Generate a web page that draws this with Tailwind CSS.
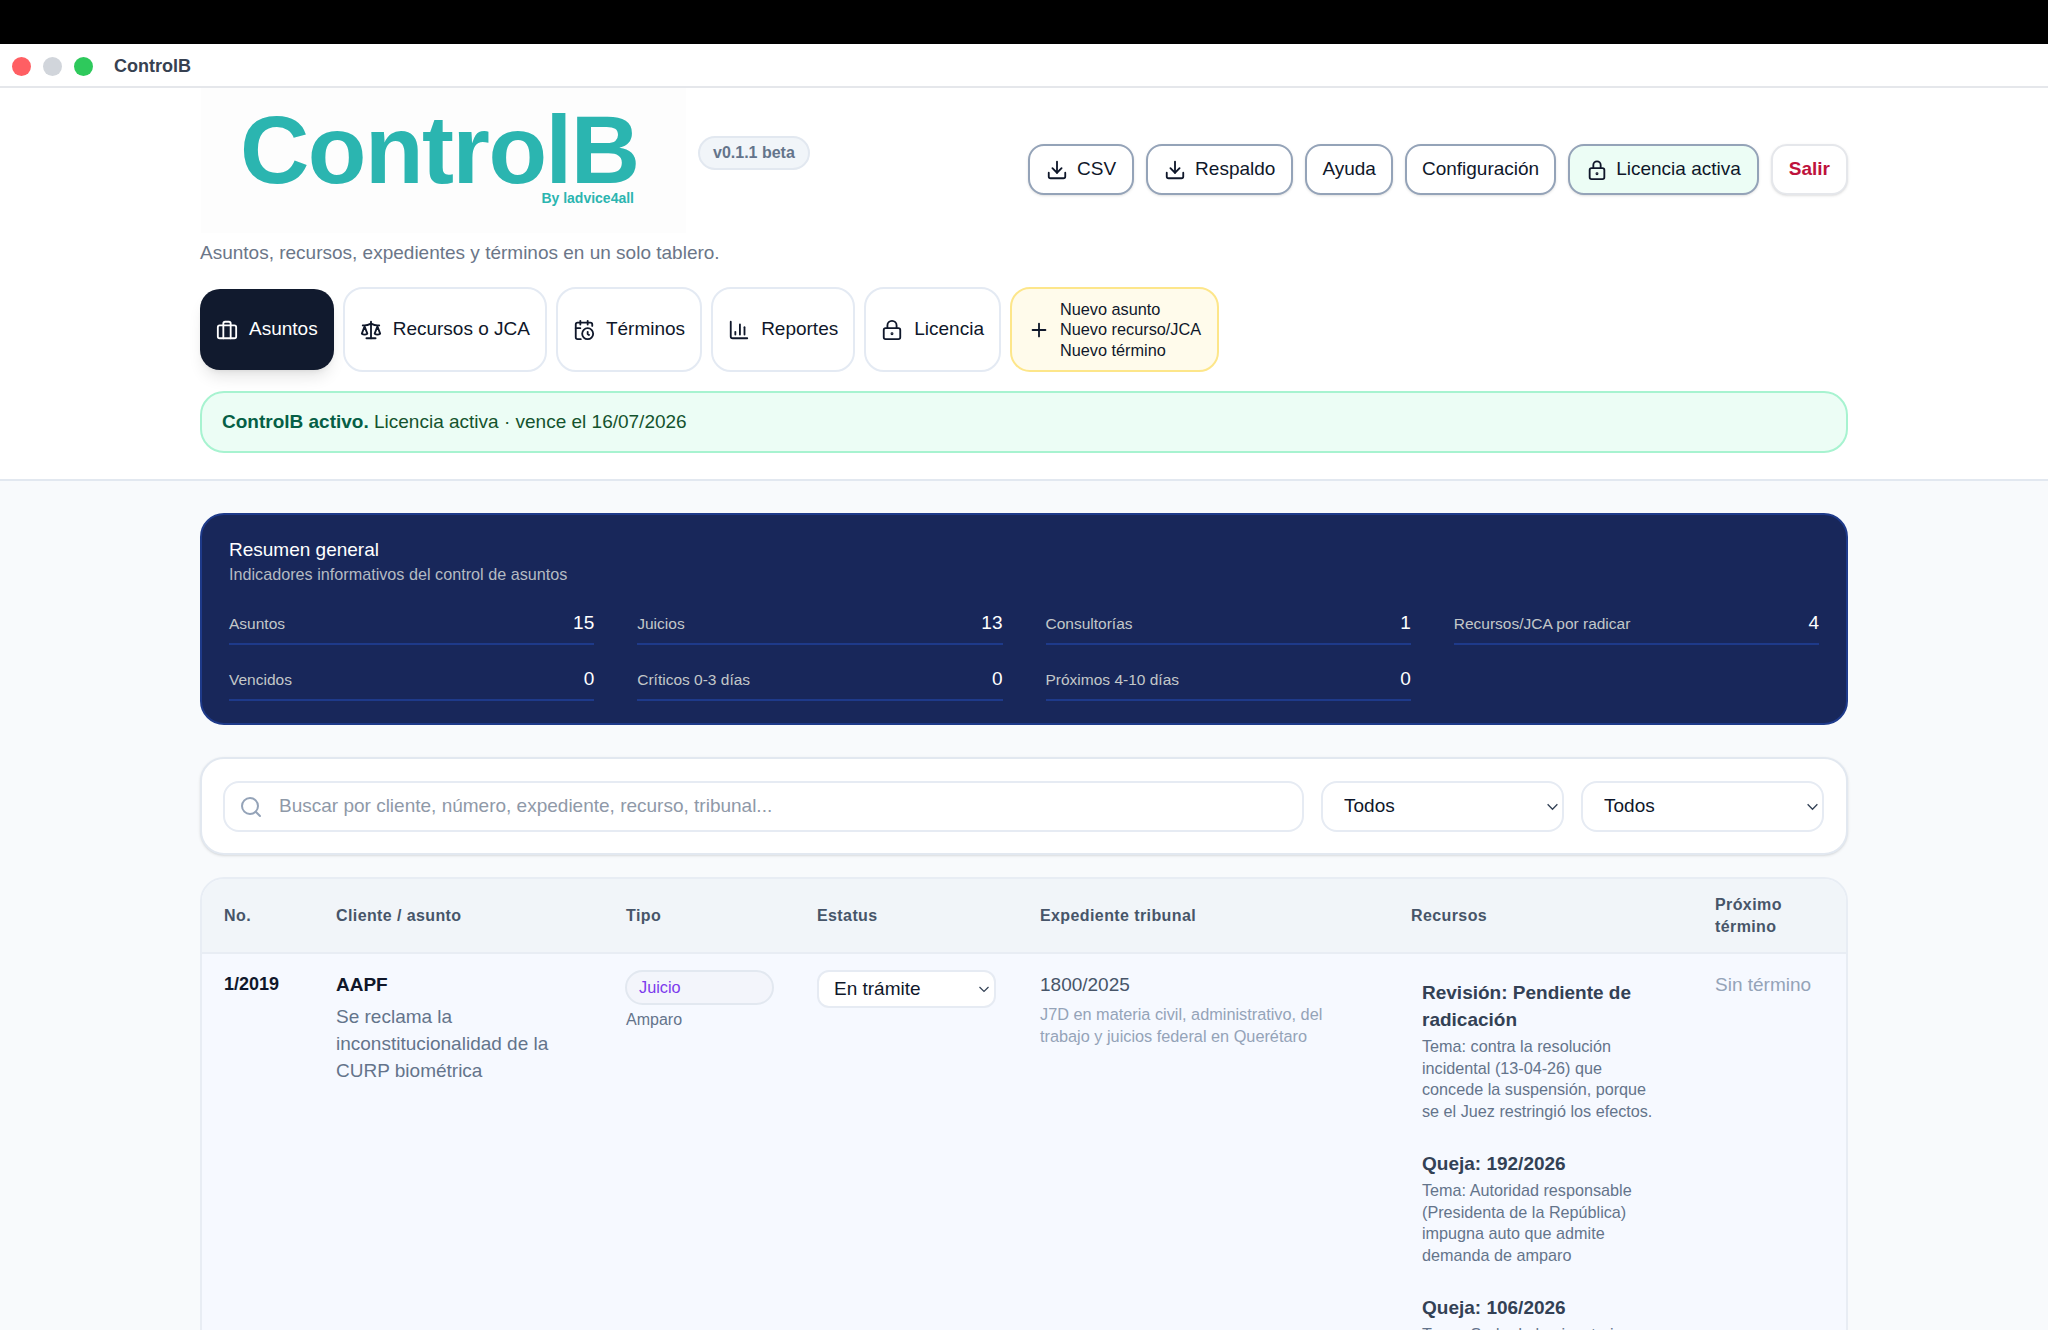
<!DOCTYPE html>
<html lang="es">
<head>
  <meta charset="UTF-8" />
  <meta name="viewport" content="width=device-width, initial-scale=1" />
  <title>ControlB</title>
  <script src="https://cdn.jsdelivr.net/npm/@tailwindcss/browser@4"></script>
</head>
<body class="h-[1330px] overflow-hidden bg-[#f8fafc] font-['Liberation_Sans',Arial,sans-serif] text-[#0f172a]">
  <div class="h-[44px] bg-black"></div>

  <!-- Window title -->
  <div class="flex h-[44px] items-center gap-3 border-b-2 border-[#e5e7eb] bg-white pl-3 pt-[2px]">
    <span class="size-[19px] rounded-full bg-[#ff5f63]"></span>
    <span class="size-[19px] rounded-full bg-[#d1d5db]"></span>
    <span class="size-[19px] rounded-full bg-[#2ec95c]"></span>
    <span class="ml-[9px] text-[18px] font-bold text-[#374151]">ControlB</span>
  </div>

  <header class="border-b-2 border-[#e2e8f0] bg-white px-[200px] pb-[26px]">
    <div class="flex items-start justify-between">
      <div class="flex items-start">
        <div class="ml-px flex h-[145px] w-[485px] flex-col items-start bg-[#fdfdfd] pl-[39px] pt-[22px]">
          <div class="flex w-[397px] flex-col items-end text-[#2bb5b0]">
            <div class="w-full text-[96px] leading-[80px] font-bold tracking-[-1.5px]">ControlB</div>
            <div class="pr-[3px] text-[14px] leading-[16px] font-bold">By ladvice4all</div>
          </div>
        </div>
        <span class="ml-3 mt-[48px] rounded-full border-2 border-[#e2e8f0] bg-[#f1f5f9] px-[13px] py-[6px] text-[16px] leading-[18px] font-bold text-[#64748b]">v0.1.1 beta</span>
      </div>

      <div class="mt-[56px] flex gap-3">
        <button class="flex h-[51px] items-center gap-[9px] rounded-2xl border-2 border-[#94a3b8] bg-white px-[16px] text-[19px] shadow-sm">
          <svg class="size-[22px]" viewBox="0 0 24 24" fill="none" stroke="currentColor" stroke-width="2" stroke-linecap="round" stroke-linejoin="round"><path d="M21 15v4a2 2 0 0 1-2 2H5a2 2 0 0 1-2-2v-4"/><polyline points="7 10 12 15 17 10"/><line x1="12" x2="12" y1="15" y2="3"/></svg>
          CSV
        </button>
        <button class="flex h-[51px] items-center gap-[9px] rounded-2xl border-2 border-[#94a3b8] bg-white px-[16px] text-[19px] shadow-sm">
          <svg class="size-[22px]" viewBox="0 0 24 24" fill="none" stroke="currentColor" stroke-width="2" stroke-linecap="round" stroke-linejoin="round"><path d="M21 15v4a2 2 0 0 1-2 2H5a2 2 0 0 1-2-2v-4"/><polyline points="7 10 12 15 17 10"/><line x1="12" x2="12" y1="15" y2="3"/></svg>
          Respaldo
        </button>
        <button class="flex h-[51px] items-center rounded-2xl border-2 border-[#94a3b8] bg-white px-[15px] text-[19px] shadow-sm">Ayuda</button>
        <button class="flex h-[51px] items-center rounded-2xl border-2 border-[#94a3b8] bg-white px-[15px] text-[19px] shadow-sm">Configuración</button>
        <button class="flex h-[51px] items-center gap-[8px] rounded-2xl border-2 border-[#94a3b8] bg-[#ecfdf5] px-[16px] text-[19px] shadow-sm">
          <svg class="size-[22px]" viewBox="0 0 24 24" fill="none" stroke="currentColor" stroke-width="2" stroke-linecap="round" stroke-linejoin="round"><rect width="16" height="12" x="4" y="10" rx="2"/><path d="M8 10V6.5a4 4 0 0 1 8 0V10"/><circle cx="12" cy="16" r="0.6"/></svg>
          Licencia activa
        </button>
        <button class="flex h-[51px] items-center rounded-2xl border-2 border-[#e5e7eb] bg-white px-[16px] text-[19px] font-bold text-[#be123c] shadow-sm">Salir</button>
      </div>
    </div>

    <p class="mt-[8px] text-[19px] leading-[24px] text-[#6b7688]">Asuntos, recursos, expedientes y términos en un solo tablero.</p>

    <nav class="mt-[22px] flex h-[85px] items-stretch gap-[9px]">
      <button class="my-[2px] flex items-center gap-[11px] rounded-[20px] bg-[#111a2e] px-4 text-[19px] text-white shadow-lg">
        <svg class="size-[22px]" viewBox="0 0 24 24" fill="none" stroke="currentColor" stroke-width="2" stroke-linecap="round" stroke-linejoin="round"><rect width="20" height="14" x="2" y="7" rx="2"/><path d="M16 21V5a2 2 0 0 0-2-2h-4a2 2 0 0 0-2 2v16"/></svg>
        Asuntos
      </button>
      <button class="flex items-center gap-[11px] rounded-[20px] border-2 border-[#e4eaf3] bg-white px-[15px] text-[19px]">
        <svg class="size-[22px]" viewBox="0 0 24 24" fill="none" stroke="currentColor" stroke-width="2" stroke-linecap="round" stroke-linejoin="round"><path d="m16 16 3-8 3 8c-.87.65-1.92 1-3 1s-2.13-.35-3-1Z"/><path d="m2 16 3-8 3 8c-.87.65-1.92 1-3 1s-2.13-.35-3-1Z"/><path d="M7 21h10"/><path d="M12 3v18"/><path d="M3 7h2c2 0 5-1 7-2 2 1 5 2 7 2h2"/></svg>
        Recursos o JCA
      </button>
      <button class="flex items-center gap-[11px] rounded-[20px] border-2 border-[#e4eaf3] bg-white px-[15px] text-[19px]">
        <svg class="size-[22px]" viewBox="0 0 24 24" fill="none" stroke="currentColor" stroke-width="2" stroke-linecap="round" stroke-linejoin="round"><path d="M21 7.5V6a2 2 0 0 0-2-2H5a2 2 0 0 0-2 2v14a2 2 0 0 0 2 2h3.5"/><path d="M16 2v4"/><path d="M8 2v4"/><path d="M3 10h5"/><path d="M17.5 17.5 16 16.3V14"/><circle cx="16" cy="16" r="6"/></svg>
        Términos
      </button>
      <button class="flex items-center gap-[11px] rounded-[20px] border-2 border-[#e4eaf3] bg-white px-[15px] text-[19px]">
        <svg class="size-[22px]" viewBox="0 0 24 24" fill="none" stroke="currentColor" stroke-width="2" stroke-linecap="round" stroke-linejoin="round"><path d="M3 3v16a2 2 0 0 0 2 2h16"/><path d="M8 17v-3"/><path d="M13 17V6"/><path d="M18 17V9"/></svg>
        Reportes
      </button>
      <button class="flex items-center gap-[11px] rounded-[20px] border-2 border-[#e4eaf3] bg-white px-[15px] text-[19px]">
        <svg class="size-[22px]" viewBox="0 0 24 24" fill="none" stroke="currentColor" stroke-width="2" stroke-linecap="round" stroke-linejoin="round"><rect width="18" height="12" x="3" y="10" rx="2"/><path d="M7 10V7a5 5 0 0 1 10 0v3"/><circle cx="12" cy="16" r="0.6"/></svg>
        Licencia
      </button>
      <button class="flex items-center gap-[10px] rounded-[20px] border-2 border-[#fde68a] bg-[#fffbeb] px-[16px] text-left text-[16.3px] leading-[20.5px]">
        <svg class="size-[22px]" viewBox="0 0 24 24" fill="none" stroke="currentColor" stroke-width="2" stroke-linecap="round" stroke-linejoin="round"><path d="M5 12h14"/><path d="M12 5v14"/></svg>
        <span>Nuevo asunto<br />Nuevo recurso/JCA<br />Nuevo término</span>
      </button>
    </nav>

    <div class="mt-[19px] flex h-[62px] items-center rounded-[24px] border-2 border-[#a7f3d0] bg-[#ecfdf5] px-[20px] text-[19px] text-[#14532d]">
      <p><b class="text-[#065f46]">ControlB activo.</b> Licencia activa · vence el 16/07/2026</p>
    </div>
  </header>

  <main class="px-[200px] pt-[32px]">
    <!-- Summary -->
    <section class="h-[212px] rounded-[24px] border-2 border-[#1e3a8a] bg-[#18275a] px-[27px] pt-[23px]">
      <h2 class="text-[19px] leading-[24px] text-white">Resumen general</h2>
      <p class="text-[16.2px] leading-[24px] text-[#b4bac2]">Indicadores informativos del control de asuntos</p>
      <div class="mt-[23px] grid grid-cols-4 gap-x-[43px] gap-y-[20px]">
        <div class="flex h-[36px] items-start justify-between border-b-2 border-[#1e3a8a]"><span class="pt-[3px] text-[15.5px] text-[#c3c7c9]">Asuntos</span><span class="text-[19px] text-white">15</span></div>
        <div class="flex h-[36px] items-start justify-between border-b-2 border-[#1e3a8a]"><span class="pt-[3px] text-[15.5px] text-[#c3c7c9]">Juicios</span><span class="text-[19px] text-white">13</span></div>
        <div class="flex h-[36px] items-start justify-between border-b-2 border-[#1e3a8a]"><span class="pt-[3px] text-[15.5px] text-[#c3c7c9]">Consultorías</span><span class="text-[19px] text-white">1</span></div>
        <div class="flex h-[36px] items-start justify-between border-b-2 border-[#1e3a8a]"><span class="pt-[3px] text-[15.5px] text-[#c3c7c9]">Recursos/JCA por radicar</span><span class="text-[19px] text-white">4</span></div>
        <div class="flex h-[36px] items-start justify-between border-b-2 border-[#1e3a8a]"><span class="pt-[3px] text-[15.5px] text-[#c3c7c9]">Vencidos</span><span class="text-[19px] text-white">0</span></div>
        <div class="flex h-[36px] items-start justify-between border-b-2 border-[#1e3a8a]"><span class="pt-[3px] text-[15.5px] text-[#c3c7c9]">Críticos 0-3 días</span><span class="text-[19px] text-white">0</span></div>
        <div class="flex h-[36px] items-start justify-between border-b-2 border-[#1e3a8a]"><span class="pt-[3px] text-[15.5px] text-[#c3c7c9]">Próximos 4-10 días</span><span class="text-[19px] text-white">0</span></div>
      </div>
    </section>

    <!-- Filters -->
    <section class="mt-[32px] flex h-[98px] items-center gap-[17px] rounded-[24px] border-2 border-[#e2e8f0] bg-white pl-[21px] pr-[22px] shadow-sm">
      <div class="relative flex-1">
        <svg class="absolute left-[16px] top-[14px] size-[24px] text-[#94a3b8]" viewBox="0 0 24 24" fill="none" stroke="currentColor" stroke-width="2" stroke-linecap="round" stroke-linejoin="round"><circle cx="11" cy="11" r="8"/><path d="m21 21-4.3-4.3"/></svg>
        <input class="h-[51px] w-full rounded-2xl border-2 border-[#e6ebf3] bg-white pl-[54px] text-[19px] placeholder:text-[#8f99a8]" placeholder="Buscar por cliente, número, expediente, recurso, tribunal..." />
      </div>
      <div class="relative w-[243px]">
        <select class="h-[51px] w-full appearance-none rounded-2xl border-2 border-[#e6ebf3] bg-white pl-[21px] text-[19px]"><option>Todos</option></select>
        <svg class="absolute right-[5px] top-[19px] size-[13px]" viewBox="0 0 12 12" fill="none" stroke="#334155" stroke-width="1.2"><path d="M1.5 4 6 8.5 10.5 4"/></svg>
      </div>
      <div class="relative w-[243px]">
        <select class="h-[51px] w-full appearance-none rounded-2xl border-2 border-[#e6ebf3] bg-white pl-[21px] text-[19px]"><option>Todos</option></select>
        <svg class="absolute right-[5px] top-[19px] size-[13px]" viewBox="0 0 12 12" fill="none" stroke="#334155" stroke-width="1.2"><path d="M1.5 4 6 8.5 10.5 4"/></svg>
      </div>
    </section>

    <!-- Table -->
    <section class="mt-[22px] h-[600px] overflow-hidden rounded-t-[24px] border-2 border-[#e8edf4] bg-[#f6f9ff]">
      <table class="w-full table-fixed border-collapse text-left">
        <colgroup>
          <col class="w-[112px]" /><col class="w-[290px]" /><col class="w-[191px]" /><col class="w-[223px]" /><col class="w-[371px]" /><col class="w-[304px]" /><col />
        </colgroup>
        <thead class="bg-[#f1f5f9] text-[16px] leading-[22px] font-bold tracking-[0.4px] text-[#475569]">
          <tr class="h-[74px] border-b-2 border-[#e8edf4]">
            <th class="pl-[22px] pr-2 font-bold">No.</th>
            <th class="pl-[22px] pr-2 font-bold">Cliente / asunto</th>
            <th class="pl-[22px] pr-2 font-bold">Tipo</th>
            <th class="pl-[22px] pr-2 font-bold">Estatus</th>
            <th class="pl-[22px] pr-2 font-bold">Expediente tribunal</th>
            <th class="pl-[22px] pr-2 font-bold">Recursos</th>
            <th class="pl-[22px] pr-2 font-bold">Próximo término</th>
          </tr>
        </thead>
        <tbody>
          <tr class="align-top">
            <td class="pl-[22px] pt-[17px] text-[18px] leading-[27px] font-bold">1/2019</td>
            <td class="pl-[22px] pr-4 pt-[17px]">
              <div class="text-[19px] leading-[27px] font-bold">AAPF</div>
              <div class="mt-[5px] text-[19px] leading-[27px] text-[#64748b]">Se reclama la inconstitucionalidad de la CURP biométrica</div>
            </td>
            <td class="pl-[21px] pt-[16px]">
              <span class="block h-[35px] w-[149px] rounded-full border-2 border-[#e2e8f0] bg-[#f3f5fb] pl-[12px] text-[16.3px] leading-[31px] text-[#7c3aed]">Juicio</span>
              <div class="mt-[4px] pl-px text-[16px] leading-[22px] text-[#64748b]">Amparo</div>
            </td>
            <td class="pl-[22px] pt-[16px]">
              <div class="relative w-[179px]">
                <select class="block h-[38px] w-full appearance-none rounded-xl border-2 border-[#e6ebf3] bg-white pl-[15px] text-[19px]"><option>En trámite</option></select>
                <svg class="absolute right-[6px] top-[13px] size-[12px]" viewBox="0 0 12 12" fill="none" stroke="#334155" stroke-width="1.2"><path d="M1.5 4 6 8.5 10.5 4"/></svg>
              </div>
            </td>
            <td class="pl-[22px] pr-4 pt-[17px]">
              <div class="text-[19px] leading-[27px] text-[#475569]">1800/2025</div>
              <div class="mt-[5px] text-[16.3px] leading-[22px] text-[#94a3b8]">J7D en materia civil, administrativo, del trabajo y juicios federal en Querétaro</div>
            </td>
            <td class="pl-[33px] pr-[33px] pt-[25px]">
              <div class="text-[19px] leading-[27px] font-bold text-[#334155]">Revisión: Pendiente de radicación</div>
              <div class="mt-[3px] text-[16.2px] leading-[21.7px] text-[#64748b]">Tema: contra la resolución incidental (13-04-26) que concede la suspensión, porque se el Juez restringió los efectos.</div>
              <div class="mt-[27px] text-[19px] leading-[27px] font-bold text-[#334155]">Queja: 192/2026</div>
              <div class="mt-[3px] text-[16.2px] leading-[21.7px] text-[#64748b]">Tema: Autoridad responsable (Presidenta de la República) impugna auto que admite demanda de amparo</div>
              <div class="mt-[27px] text-[19px] leading-[27px] font-bold text-[#334155]">Queja: 106/2026</div>
              <div class="mt-[3px] text-[16.2px] leading-[21.7px] text-[#64748b]">Tema: Sede de la ejecutoria</div>
            </td>
            <td class="pl-[22px] pt-[17px] text-[19px] leading-[27px] text-[#94a3b8]">Sin término</td>
          </tr>
        </tbody>
      </table>
    </section>
  </main>
</body>
</html>
